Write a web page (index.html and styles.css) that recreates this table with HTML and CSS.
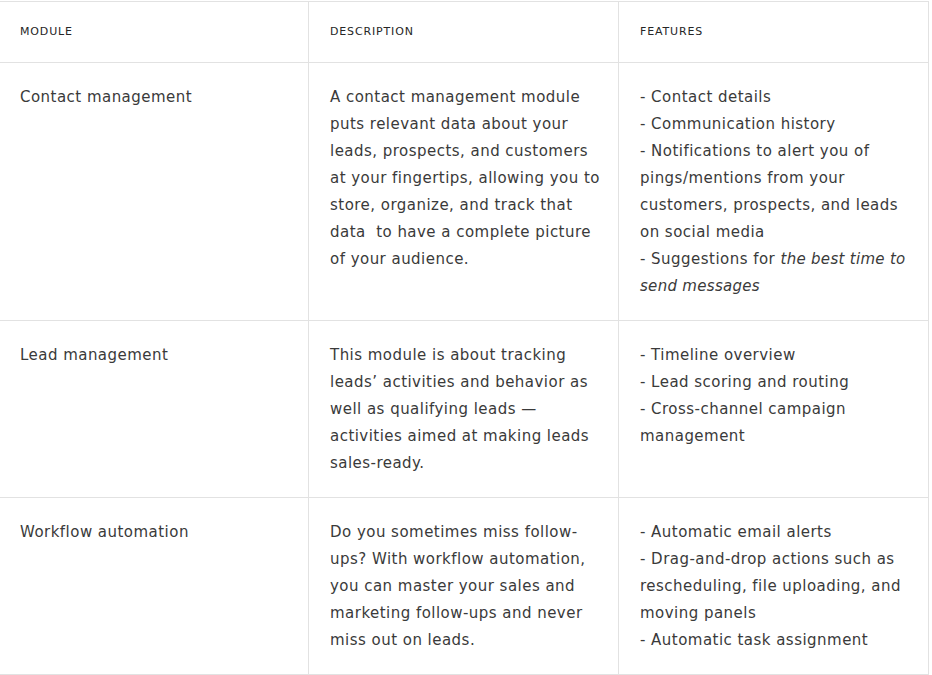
FILE: index.html
```html
<!DOCTYPE html>
<html lang="en">
<head>
<meta charset="utf-8">
<title>CRM modules</title>
<link rel="stylesheet" href="styles.css">
</head>
<body>
<table class="modules">
  <thead>
    <tr>
      <th>Module</th>
      <th>Description</th>
      <th>Features</th>
    </tr>
  </thead>
  <tbody>
    <tr>
      <td>Contact management</td>
      <td>A contact management module puts relevant data about your leads, prospects, and customers at your fingertips, allowing you to store, organize, and track that data&nbsp; to have a complete picture of your audience.</td>
      <td>- Contact details<br>- Communication history<br>- Notifications to alert you of pings/mentions from your customers, prospects, and leads on social media<br>- Suggestions for <em>the best time to send messages</em></td>
    </tr>
    <tr>
      <td>Lead management</td>
      <td>This module is about tracking leads’ activities and behavior as well as qualifying leads — activities aimed at making leads sales-ready.</td>
      <td>- Timeline overview<br>- Lead scoring and routing<br>- Cross-channel campaign management</td>
    </tr>
    <tr>
      <td>Workflow automation</td>
      <td>Do you sometimes miss follow-ups? With workflow automation, you can master your sales and marketing follow-ups and never miss out on leads.</td>
      <td>- Automatic email alerts<br>- Drag-and-drop actions such as rescheduling, file uploading, and moving panels<br>- Automatic task assignment</td>
    </tr>
  </tbody>
</table>
</body>
</html>
```

FILE: styles.css
```css
html, body {
  margin: 0;
  padding: 0;
  background: #ffffff;
}

body {
  padding-top: 1px;
  overflow: hidden;
}

.modules {
  border-collapse: collapse;
  table-layout: fixed;
  width: 931px;
  margin-left: -2px;
  font-family: "DejaVu Sans", "Open Sans", sans-serif;
  color: #3a3a3a;
}

.modules th,
.modules td {
  border: 1px solid #e2e2e2;
  text-align: left;
  vertical-align: top;
  width: 33.33%;
}

.modules th {
  padding: 21px 15px 21px 21px;
  font-size: 11px;
  line-height: 18px;
  font-weight: 400;
  text-transform: uppercase;
  letter-spacing: 0.85px;
  color: #262626;
}

.modules td {
  padding: 21px 15px 20px 21px;
  font-size: 15px;
  line-height: 27px;
  letter-spacing: 0.47px;
}

.modules em {
  font-style: italic;
  letter-spacing: 0.3px;
}
```
